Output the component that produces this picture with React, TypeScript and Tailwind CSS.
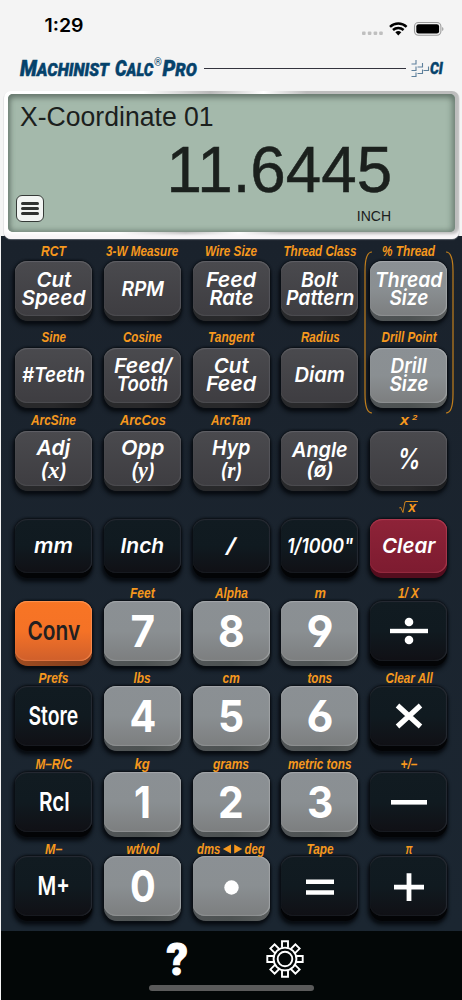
import { useLayoutEffect, useRef, useState } from "react";
import type { ReactNode } from "react";
import clsx from "clsx";

type Tone = "dark" | "light" | "black" | "red" | "orange";

type KeyDef = {
	label?: ReactNode;
	labelWidth?: number;
	lines?: { text: ReactNode; width: number }[];
	symbol?: ReactNode;
	tone: Tone;
	size?: "word" | "paren" | "store" | "digit" | "percent";
};

type RowDef = {
	row: string;
	key: string;
	keys: KeyDef[];
};

const faces: Record<Tone, string> = {
	dark: "bg-linear-to-b from-[#4a4a4e] to-[#3e3d41] shadow-[inset_0_1px_1px_#616166,inset_-1px_0_1px_#56565a,inset_0_-1px_1px_#4d4d50]",
	light: "bg-linear-to-b from-[#8b9094] via-[#8a8f92] to-[#7c7e7f] shadow-[inset_0_1px_1px_#a3a7aa,inset_-1px_0_1px_#a0a4a6,inset_0_-1px_1px_#8d9091]",
	black: "bg-linear-to-b from-[#111b21] via-[#101a20] to-[#101015] shadow-[inset_0_1px_1px_#272b33,inset_-1px_0_1px_#272b33,inset_0_-1px_1px_#191b20]",
	red: "bg-linear-to-b from-[#8e2338] to-[#7d1b30] shadow-[inset_0_1px_1px_#b03a50,inset_-1px_0_1px_#a83a4e,inset_0_-1px_1px_#942c40]",
	orange: "bg-linear-to-b from-[#f87524] via-[#f57226] to-[#cf5f2b] shadow-[inset_0_1px_1px_#ff9450,inset_-1px_0_1px_#f98a4e,inset_0_-1px_1px_#de7440]",
};

const bases: Record<Tone, string> = {
	dark: "bg-linear-to-r from-[#28292b] via-[#29292b] to-[#1b1c1e]",
	light: "bg-linear-to-r from-[#505456] via-[#4d5252] to-[#5b5e5e]",
	black: "bg-[#030406]",
	red: "bg-[#540d1e]",
	orange: "bg-linear-to-r from-[#a04c20] to-[#7d3b1c]",
};

const sizes = {
	word: "text-[20.5px] leading-[18px] font-semibold italic",
	paren: "pt-[3px] text-[20.5px] leading-[20px] font-semibold italic",
	store: "text-[26px] leading-[30px] font-semibold",
	digit: "text-[44px] leading-[48px] font-bold",
	percent: "text-[28px] leading-[30px] font-semibold italic",
};

// Squeezes or stretches one line of text to a fixed width
const Fit = ({ width, left, className, children }: { width: number; left?: boolean; className?: string; children: ReactNode }) => {
	const ref = useRef<HTMLSpanElement>(null);
	const [scale, setScale] = useState(1);

	useLayoutEffect(() => {
		if (ref.current) setScale(width / ref.current.offsetWidth);
	}, [width]);

	return (
		<span className={clsx("flex", left ? "justify-start" : "justify-center", className)} style={{ width }}>
			<span
				ref={ref}
				className={clsx("inline-block shrink-0 whitespace-nowrap", left ? "origin-left" : "origin-center")}
				style={{ transform: `scaleX(${scale})` }}
			>
				{children}
			</span>
		</span>
	);
};

const Serif = ({ children }: { children: string }) => (
	<>
		(<span className="font-['Liberation_Serif',serif] text-[24px] leading-none font-bold">{children}</span>)
	</>
);

const Symbol = ({ children }: { children: ReactNode }) => (
	<svg width="44" height="36" viewBox="-22 -18 44 36" fill="#fff">{children}</svg>
);

const divide = (
	<Symbol>
		<rect x="-19" y="-2.2" width="38" height="4.4" />
		<circle cy="-9" r="4.3" />
		<circle cy="9" r="4.3" />
	</Symbol>
);
const times = <Symbol><path d="M-11.5-10.5 11.5 10.5M11.5-10.5-11.5 10.5" stroke="#fff" strokeWidth="5.2" /></Symbol>;
const minus = <Symbol><rect x="-18" y="-2" width="36" height="4.6" /></Symbol>;
const equals = <Symbol><path d="M-14-6.6h28v4.6h-28zM-14 4.2h28v4.6h-28z" /></Symbol>;
const plus = <Symbol><path d="M-15-1.2h30v4.6h-30zM-2.4-12.8h4.8v27.8h-4.8z" /></Symbol>;
const dot = <Symbol><circle cx=".5" cy="1.5" r="7.2" /></Symbol>;

const word = (...pairs: [ReactNode, number][]) => pairs.map(([text, width]) => ({ text, width }));

const rows: RowDef[] = [
	{
		row: "h-[86px]",
		key: "mt-[2px] h-[60px]",
		keys: [
			{ label: "RCT", labelWidth: 25, lines: word(["Cut", 35], ["Speed", 64]), tone: "dark" },
			{ label: "3-W Measure", labelWidth: 72, lines: word(["RPM", 43]), tone: "dark" },
			{ label: "Wire Size", labelWidth: 52, lines: word(["Feed", 50], ["Rate", 44]), tone: "dark" },
			{ label: "Thread Class", labelWidth: 73, lines: word(["Bolt", 37], ["Pattern", 68]), tone: "dark" },
			{ label: "% Thread", labelWidth: 53, lines: word(["Thread", 67], ["Size", 39]), tone: "light" },
		],
	},
	{
		row: "h-[83px]",
		key: "mt-[2.5px] h-[60px]",
		keys: [
			{ label: "Sine", labelWidth: 25, lines: word(["#Teeth", 63]), tone: "dark" },
			{ label: "Cosine", labelWidth: 39, lines: word(["Feed/", 58], ["Tooth", 52]), tone: "dark" },
			{ label: "Tangent", labelWidth: 46, lines: word(["Cut", 35], ["Feed", 50]), tone: "dark" },
			{ label: "Radius", labelWidth: 39, lines: word(["Diam", 50]), tone: "dark" },
			{ label: "Drill Point", labelWidth: 55, lines: word(["Drill", 36], ["Size", 39]), tone: "light" },
		],
	},
	{
		row: "h-[87px]",
		key: "mt-[3px] h-[60px]",
		keys: [
			{ label: "ArcSine", labelWidth: 45, lines: word(["Adj", 34], [<Serif>x</Serif>, 26]), size: "paren", tone: "dark" },
			{ label: "ArcCos", labelWidth: 46, lines: word(["Opp", 43], [<Serif>y</Serif>, 24]), size: "paren", tone: "dark" },
			{ label: "ArcTan", labelWidth: 40, lines: word(["Hyp", 38], [<Serif>r</Serif>, 22]), size: "paren", tone: "dark" },
			{ lines: word(["Angle", 56], ["(ø)", 27]), size: "paren", tone: "dark" },
			{ label: <>x<sup className="top-[-5px] ml-[3px] text-[8px]">2</sup></>, labelWidth: 17, lines: word(["%", 23]), size: "percent", tone: "dark" },
		],
	},
	{
		row: "h-[86px]",
		key: "mt-[4px] h-[59px]",
		keys: [
			{ lines: word(["mm", 39]), tone: "black" },
			{ lines: word(["Inch", 44]), tone: "black" },
			{ lines: word(["/", 10]), tone: "black" },
			{ lines: word(['1/1000"', 66]), tone: "black" },
			{
				label: (
					<span className="flex items-center">
						<svg width="7" height="12" viewBox="0 0 7 12" fill="none" stroke="#d98a1c" strokeWidth=".9"><path d="M0 7.5 1.5 6 4 11.5 6 .8H7" /></svg>
						<span className="h-[12px] border-t border-[#d98a1c] px-[2px] leading-[11px]">x</span>
					</span>
				),
				labelWidth: 19,
				lines: word(["Clear", 53]),
				tone: "red",
			},
		],
	},
	{
		row: "h-[85px]",
		key: "h-[65px]",
		keys: [
			{ lines: word(["Conv", 53]), size: "store", tone: "orange" },
			{ label: "Feet", labelWidth: 25, lines: word(["7", 25]), size: "digit", tone: "light" },
			{ label: "Alpha", labelWidth: 33, lines: word(["8", 27]), size: "digit", tone: "light" },
			{ label: "m", labelWidth: 11, lines: word(["9", 27]), size: "digit", tone: "light" },
			{ label: "1/ X", labelWidth: 21, symbol: divide, tone: "black" },
		],
	},
	{
		row: "h-[86px]",
		key: "h-[65px]",
		keys: [
			{ label: "Prefs", labelWidth: 30, lines: word(["Store", 50]), size: "store", tone: "black" },
			{ label: "lbs", labelWidth: 17, lines: word(["4", 27]), size: "digit", tone: "light" },
			{ label: "cm", labelWidth: 17, lines: word(["5", 26]), size: "digit", tone: "light" },
			{ label: "tons", labelWidth: 25, lines: word(["6", 27]), size: "digit", tone: "light" },
			{ label: "Clear All", labelWidth: 47, symbol: times, tone: "black" },
		],
	},
	{
		row: "h-[85px]",
		key: "h-[65px]",
		keys: [
			{ label: "M–R/C", labelWidth: 37, lines: word(["Rcl", 31]), size: "store", tone: "black" },
			{ label: "kg", labelWidth: 15, lines: word(["1", 17]), size: "digit", tone: "light" },
			{ label: "grams", labelWidth: 36, lines: word(["2", 26]), size: "digit", tone: "light" },
			{ label: "metric tons", labelWidth: 63, lines: word(["3", 26]), size: "digit", tone: "light" },
			{ label: "+/–", labelWidth: 17, symbol: minus, tone: "black" },
		],
	},
	{
		row: "h-[90px]",
		key: "-mt-px h-[65px]",
		keys: [
			{ label: "M–", labelWidth: 17, lines: word(["M+", 32]), size: "store", tone: "black" },
			{ label: "wt/vol", labelWidth: 33, lines: word(["0", 26]), size: "digit", tone: "light" },
			{
				label: (
					<span className="flex items-center">
						dms
						<svg width="26" height="10" viewBox="0 0 26 10" fill="#f6981d" className="mx-[2px]"><path d="M11 .5v9L1 5zM15 .5v9L25 5z" /></svg>
						deg
					</span>
				),
				labelWidth: 68,
				symbol: dot,
				tone: "light",
			},
			{ label: "Tape", labelWidth: 27, symbol: equals, tone: "black" },
			{ label: "π", labelWidth: 7, symbol: plus, tone: "black" },
		],
	},
];

const Key = ({ def, height }: { def: KeyDef; height: string }) => {
	const size = def.size ?? "word";

	return (
		<div className="flex flex-col items-center">
			<div className="flex h-4 items-center font-['Liberation_Sans',sans-serif] text-[14px] leading-4 font-bold text-[#f6981d] italic">
				{def.label && <Fit width={def.labelWidth ?? 40}>{def.label}</Fit>}
			</div>
			<button
				className={clsx(
					"block w-[77px] rounded-[13px] pb-[5px] shadow-[0_0_2px_1px_#0a0e13,-1px_3px_4px_1px_#070b10]",
					bases[def.tone],
					height,
				)}
			>
				<div
					className={clsx(
						"flex h-full flex-col items-center justify-center rounded-[13px/11px] font-['Inter',sans-serif] [font-feature-settings:'cv11','cv03','cv04']",
						faces[def.tone],
						sizes[size],
						def.tone === "orange" ? "font-medium text-[#231f20]" : "text-white",
					)}
				>
					{def.symbol}
					{def.lines?.map((line, i) => (
						<Fit key={i} width={line.width}>{line.text}</Fit>
					))}
				</div>
			</button>
		</div>
	);
};

const StatusBar = () => (
	<div className="flex h-[50px] items-center justify-between pr-[18px] pl-[44.5px]">
		<Fit width={39} className="font-['Inter',sans-serif] text-[18px] font-semibold text-black">1:29</Fit>
		<svg width="83" height="16" viewBox="0 0 83 16" className="mt-[7px]">
			<g fill="#bfbfbf">
				<rect x="1" y="10.5" width="3.6" height="3.6" rx="1" />
				<rect x="6.8" y="10.5" width="3.6" height="3.6" rx="1" />
				<rect x="12.6" y="10.5" width="3.6" height="3.6" rx="1" />
				<rect x="18.2" y="10.5" width="3.6" height="3.6" rx="1" />
			</g>
			<g fill="none" stroke="#000" strokeWidth="2.5">
				<path d="M29 5.8a12.2 12.2 0 0 1 16.6 0" />
				<path d="M32 9a7.8 7.8 0 0 1 10.6 0" />
			</g>
			<path d="M34.3 11.3a4.6 4.6 0 0 1 6 0L37.3 14.6z" />
			<rect x="53.5" y="1.5" width="26.4" height="12.8" rx="4" fill="none" stroke="#9b9b9b" strokeWidth="1.1" />
			<rect x="55.3" y="3.3" width="22.8" height="9.2" rx="2.3" />
			<path d="M81.2 6v4c1.7-.6 1.7-3.4 0-4z" fill="#9b9b9b" />
		</svg>
	</div>
);

const Brand = () => (
	<div className="flex h-[37px] items-center pl-[20px] font-['Roboto',sans-serif] text-[22px] leading-none font-black text-[#05426b] italic">
		<Fit width={89} className="[-webkit-text-stroke:0.5px_#05426b]">M<span className="text-[18px]">ACHINIST</span></Fit>
		<Fit width={38} className="ml-[6px] [-webkit-text-stroke:0.5px_#05426b]">C<span className="text-[18px]">ALC</span></Fit>
		<span className="mb-[12px] ml-px w-[8px] text-[10px] font-normal not-italic">®</span>
		<Fit width={34} className="ml-px [-webkit-text-stroke:0.5px_#05426b]">P<span className="text-[18px]">RO</span></Fit>
		<div className="ml-[7px] h-px w-[202px] bg-[#33333d]" />
		<svg width="19" height="19" viewBox="0 0 19 19" fill="none" stroke="#5c7f9b" strokeWidth="1.1" className="ml-[5px]">
			<path d="M.5 5H5V1M6.5 8h5V4M.5 11.500H5V7.500M6.500 14.500h5v-4M.5 17.500H5v-4M12.500 11.500h5v-4" />
		</svg>
		<Fit width={13} className="text-[16px] [-webkit-text-stroke:0.4px_#05426b]">CI</Fit>
	</div>
);

const Display = () => (
	<div className="relative z-10 mr-[3px] ml-[4px] h-[148px] rounded-[7px] bg-[linear-gradient(100deg,#fff_0%,#fff_29%,#b9b9b9_43%,#fff_54%,#bdbdbd_63%,#bdbdbd_100%)] pt-[3px] pr-[4px] pb-[7px] pl-[4px] shadow-[inset_0_-6px_3px_-1px_#f8f6f8,0_1px_1px_#59616a]">
		<div className="h-full rounded-[5px] bg-[#a4b9ab] pt-[9px] pl-[12px] font-['Liberation_Sans',sans-serif] text-[#1b201d] shadow-[inset_0_3px_6px_#64756b,inset_-3px_0_6px_#82968a,inset_2px_-1px_5px_#7d9084]">
			<Fit width={194} left className="text-[27px] leading-[29px]">X-Coordinate 01</Fit>
			<div className="mt-[2px] flex justify-end pr-[63px]">
				<Fit width={226} className="text-[64px] leading-[73px] [-webkit-text-stroke:0.5px_#1b201d]">11.6445</Fit>
			</div>
			<div className="-mt-[12px] flex items-start justify-between pr-[64px]">
				<button className="-ml-[4px] flex h-[27px] w-[28px] flex-col items-center justify-center gap-[2px] rounded-[6px] border-[1.5px] border-[#353a37] bg-[#f2f5f3]">
					<span className="h-[3px] w-[18px] rounded-full bg-[#303331]" />
					<span className="h-[3px] w-[18px] rounded-full bg-[#303331]" />
					<span className="h-[3px] w-[18px] rounded-full bg-[#303331]" />
				</button>
				<div className="mt-[13px] text-[14px] leading-[16px]">INCH</div>
			</div>
		</div>
	</div>
);

const Footer = () => (
	<div className="ml-px h-[69px] bg-[#030707]">
		<div className="flex h-[54px] pl-[166px]">
			<Fit width={21} className="pt-[6px] font-['Roboto',sans-serif] text-[44px] leading-[46px] font-black text-white [-webkit-text-stroke:1px_#fff]">?</Fit>
			<svg width="38" height="38" viewBox="-19 -19 38 38" fill="none" stroke="#fff" strokeWidth="1.9" className="mt-[9px] ml-[78px]">
				<circle r="11.4" />
				<circle r="7.3" />
				{[0, 45, 90, 135, 180, 225, 270, 315].map((a) => (
					<path key={a} d="M-3-11.2V-17.7H3V-11.2" transform={`rotate(${a})`} />
				))}
			</svg>
		</div>
		<div className="ml-[148px] h-[6px] w-[165px] rounded-full bg-[#5a5a5a]" />
	</div>
);

const App: React.FC = () => {
	return (
		<div className="h-[1000px] w-[462px] overflow-hidden bg-[#f4f4f4]">
			<StatusBar />
			<Brand />
			<div className="h-[4px]" />
			<Display />
			<div className="relative -mt-[3px] ml-px h-[695px] bg-linear-to-b from-[#1a222c] to-[#1b2631] pt-[7px]">
				{rows.map((r, i) => (
					<div key={i} className={clsx("ml-[8.5px] grid w-[443.5px] grid-cols-5", r.row)}>
						{r.keys.map((k, j) => (
							<Key key={j} def={k} height={r.key} />
						))}
					</div>
				))}
				{/* bracket round the two size keys */}
				<svg className="pointer-events-none absolute top-[15px] left-[363px]" width="91" height="164" viewBox="0 0 91 164" fill="none" stroke="#c17e1c" strokeWidth="1.2">
					<path d="M8 1Q1 1 1 20V143Q1 162 8 162M82 1Q89 1 89 20V143Q89 162 82 162" />
				</svg>
			</div>
			<Footer />
		</div>
	);
};

export default App;
